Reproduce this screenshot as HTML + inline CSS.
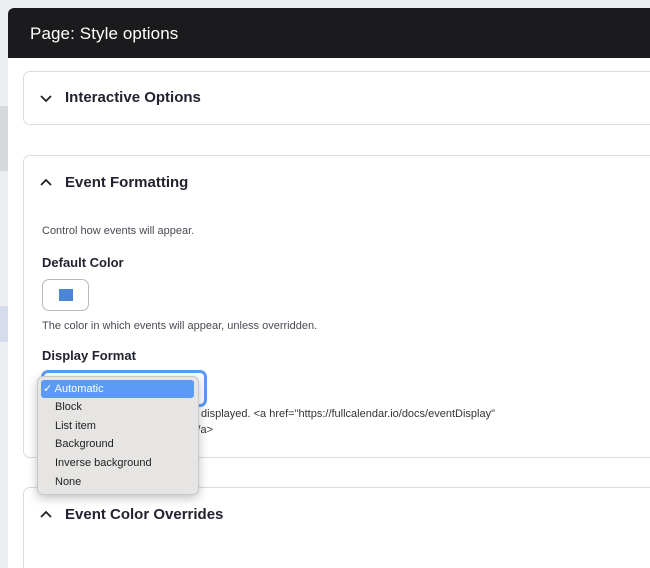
<!DOCTYPE html>
<html><head><style>
*{box-sizing:border-box;margin:0;padding:0}
body{width:650px;height:543px;overflow:hidden;background:#eceef2;font-family:"Liberation Sans",sans-serif;position:relative}
.strip{position:absolute;left:0;width:8px}
.dlg{position:absolute;left:8px;top:8px;width:660px;height:560px;background:#fff;border-radius:6px 0 0 0;overflow:hidden}
.hd{height:50px;background:#1b1b1d;color:#fff;font-size:17px;padding:16px 0 0 22px;letter-spacing:0.1px}
.card{position:absolute;left:15px;width:660px;border:1px solid #dcdce0;border-radius:7px;background:#fff}
.ttl{position:absolute;left:41px;font-size:15px;font-weight:bold;color:#222330}
.chev{position:absolute;left:15px}
.t{position:absolute;font-size:11px;color:#4a4a55;white-space:nowrap}
.lbl{position:absolute;font-size:13px;font-weight:bold;color:#222330}
.menu{position:absolute;left:37px;top:376px;width:162px;height:119px;background:#e6e5e3;border:1px solid #c8c8c8;border-radius:6px;box-shadow:0 3px 10px rgba(0,0,0,.25);font-size:11px;color:#222}
.menu div{height:18.7px;line-height:18.7px;padding-left:17px}
.menu .sel{background:#5b9bf5;color:#fff;border-radius:3px;margin:3px 4px 0 3px;padding-left:2px;height:18px;line-height:18px}
</style></head><body>
<div class="strip" style="top:106px;height:65px;background:#d6d9dc"></div>
<div class="strip" style="top:306px;height:36px;background:#d6dbee"></div>
<div class="dlg">
<div class="hd">Page: Style options</div>
<div class="card" style="top:63px;height:54px">
<svg class="chev" style="top:20px" width="14" height="12" viewBox="0 0 14 12"><path d="M2 4l5 5 5-5" stroke="#222" stroke-width="1.8" fill="none"/></svg>
<div class="ttl" style="top:17px">Interactive Options</div></div>
<div class="card" style="top:147px;height:303px">
<svg class="chev" style="top:21px" width="14" height="12" viewBox="0 0 14 12"><path d="M2 8l5-5 5 5" stroke="#222" stroke-width="1.8" fill="none"/></svg>
<div class="ttl" style="top:18px">Event Formatting</div>
<div class="t" style="left:18px;top:69px">Control how events will appear.</div>
<div class="lbl" style="left:18px;top:99px">Default Color</div>
<div style="position:absolute;left:18px;top:123px;width:47px;height:32px;border:1px solid #b8b8c0;border-radius:7px"><div style="position:absolute;left:16px;top:9px;width:14px;height:12px;background:#4a86d4"></div></div>
<div class="t" style="left:18px;top:164px">The color in which events will appear, unless overridden.</div>
<div class="lbl" style="left:18px;top:192px">Display Format</div>
<div style="position:absolute;left:17px;top:214px;width:166px;height:37px;border:3px solid #5b9bf5;border-radius:7px"></div>
<div class="t" style="right:187px;top:252px;color:#333">How events will be displayed. &lt;a href="https://fullcalendar.io/docs/eventDisplay"</div>
<div class="t" style="right:469px;top:268px;color:#333">More &lt;/a&gt;</div>
</div>
<div class="card" style="top:479px;height:100px">
<svg class="chev" style="top:21px" width="14" height="12" viewBox="0 0 14 12"><path d="M2 8l5-5 5 5" stroke="#222" stroke-width="1.8" fill="none"/></svg>
<div class="ttl" style="top:18px">Event Color Overrides</div></div>
</div>
<div class="menu">
<div class="sel">✓ Automatic</div>
<div>Block</div><div>List item</div><div>Background</div><div>Inverse background</div><div>None</div>
</div>
</body></html>
